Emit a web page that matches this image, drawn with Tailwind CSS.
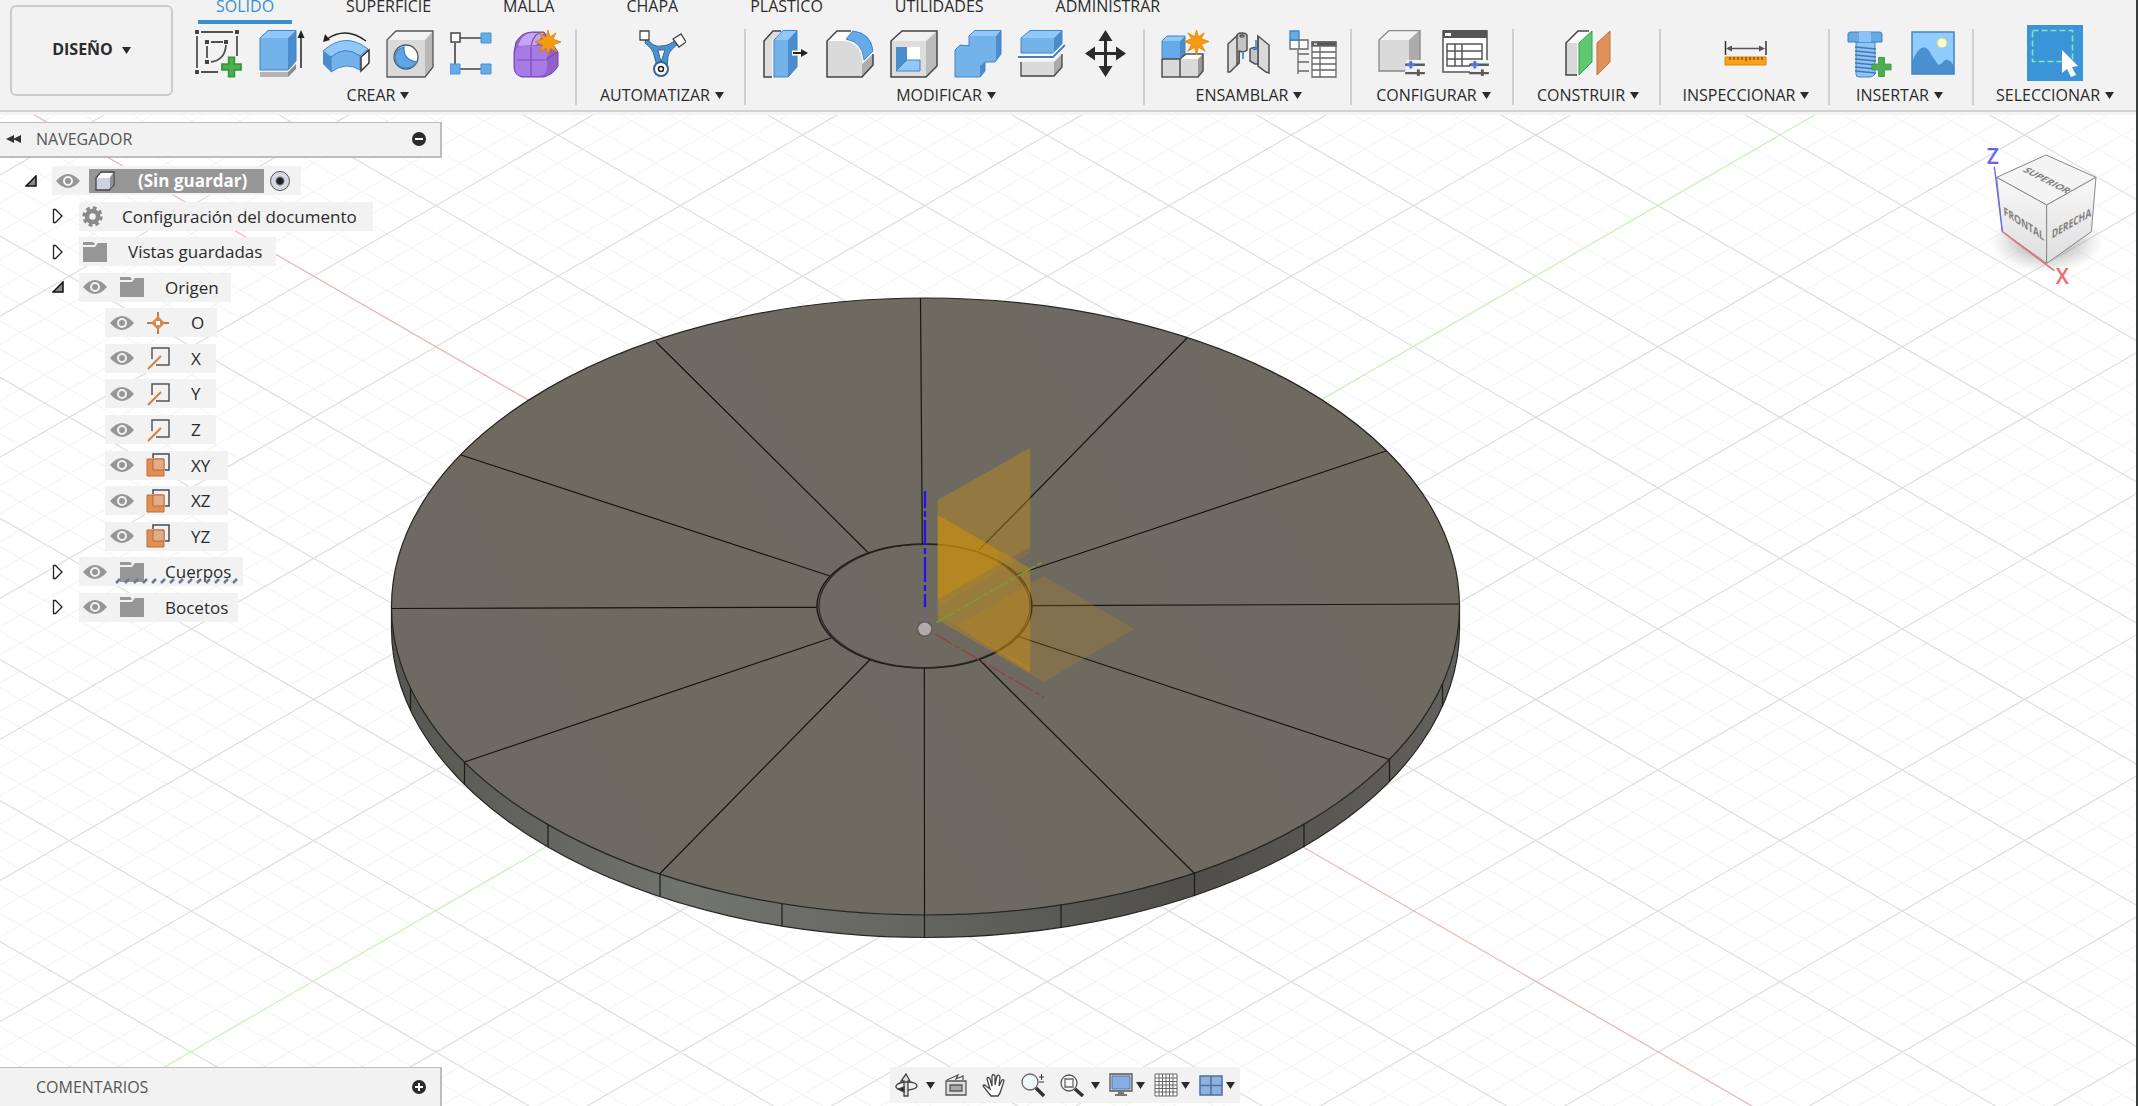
<!DOCTYPE html>
<html lang="es">
<head>
  <meta charset="UTF-8" />
  <meta name="viewport" content="width=device-width, initial-scale=1.0" />
  <title>Diseño (Sin guardar)</title>
  <script src="https://cdn.jsdelivr.net/npm/@tailwindcss/browser@4"></script>
</head>
<body class="flex h-screen flex-col overflow-hidden bg-white font-['Open_Sans','Noto_Sans',sans-serif] text-base text-[#2b2b2b]">

  <!-- shared symbols -->
  <svg class="hidden">
    <symbol id="caret" viewBox="0 0 9 7"><path d="M0 0h9L4.500 7z" fill="#2b2b2b"/></symbol>
    <symbol id="plus" viewBox="0 0 22 22"><path d="M8 1h6v7h7v6h-7v7H8v-7H1V8h7z" fill="#4caf50" stroke="#3a9440"/></symbol>
    <symbol id="star" viewBox="0 0 26 26"><path d="M13 0l2 7 6-4-3 6 8 3-8 3 4 7-7-4-2 8-2-8-7 4 4-7-8-3 8-3-4-6 7 4z" fill="#f39c12" stroke="#d98200" stroke-width=".8"/></symbol>
    <symbol id="eye" viewBox="0 0 24 16"><path d="M0 8Q6 1 12 1t12 7q-6 7-12 7T0 8z" fill="#969696"/><circle cx="12" cy="8" r="4" fill="none" stroke="#f2f2f2" stroke-width="2"/></symbol>
    <symbol id="folder" viewBox="0 0 24 20"><path d="M0 0h10l2 2-1 1H0zM0 5h12l3-4h9v19H0z" fill="#969696"/></symbol>
    <symbol id="closed" viewBox="0 0 12 16"><path d="M1.500 1.500v13h2l6.500-6.500-6.500-6.500z" fill="#fff" stroke="#222" stroke-width="1.300"/></symbol>
    <symbol id="open" viewBox="0 0 12 12"><path d="M11 1v10H1z" fill="#8a8a8a" stroke="#111" stroke-width="1.500"/></symbol>
    <symbol id="axis" viewBox="0 0 24 24"><path d="M6 13V2h17v17H10" fill="none" stroke="#555" stroke-width="1.500"/><path d="M2 23l13-13" stroke="#d17f43" stroke-width="2"/></symbol>
    <symbol id="plane" viewBox="0 0 24 24"><path d="M7 5V1h16v16h-4" fill="none" stroke="#454a50" stroke-width="1.500"/><path d="M1 6h17v17H1z" fill="#e28e54" stroke="#c06d33"/><path d="M7 6h11v11H7z" fill="#e5ab84" stroke="#a4633a" stroke-width=".8"/></symbol>
    <symbol id="sliders" viewBox="0 0 22 16"><path d="M0 4h21M0 13h21" stroke="#5a5a5a" stroke-width="2.500"/><path d="M6 0v8M2 4h8" stroke="#4878d8" stroke-width="3"/><path d="M14 9v8" stroke="#5a5a5a" stroke-width="3"/></symbol>
  </svg>

  <header class="flex h-28 shrink-0 border-b-2 border-[#d2d2d2] bg-[#f2f2f2]">
    <div class="w-[178px] shrink-0 pt-[5px] pl-[10px]">
      <button class="flex h-[91px] w-[163px] items-center justify-center gap-[9px] rounded-md border-2 border-[#cccccc] pb-1 font-bold">DISEÑO
        <svg class="mt-1 h-[7px] w-[9px]"><use href="#caret"/></svg>
      </button>
    </div>

    <div class="flex min-w-0 flex-1 flex-col">
      <!-- tabs -->
      <nav class="flex h-6 shrink-0 items-end gap-[36px] pl-5 whitespace-nowrap">
        <button class="h-6 border-b-4 border-[#3a8fcf] px-[18px] leading-none text-[#3a8fcf]"><span class="relative -top-1">SÓLIDO</span></button>
        <button class="h-6 border-b-4 border-transparent px-[18px] leading-none"><span class="relative -top-1">SUPERFICIE</span></button>
        <button class="h-6 border-b-4 border-transparent px-[18px] leading-none"><span class="relative -top-1">MALLA</span></button>
        <button class="h-6 border-b-4 border-transparent px-[18px] leading-none"><span class="relative -top-1">CHAPA</span></button>
        <button class="h-6 border-b-4 border-transparent px-[18px] leading-none"><span class="relative -top-1">PLÁSTICO</span></button>
        <button class="h-6 border-b-4 border-transparent px-[18px] leading-none"><span class="relative -top-1">UTILIDADES</span></button>
        <button class="h-6 border-b-4 border-transparent px-[18px] leading-none"><span class="relative -top-1">ADMINISTRAR</span></button>
      </nav>

      <!-- tool groups -->
      <div class="flex flex-1 whitespace-nowrap pt-[5px] pb-[5px]">
        <section class="flex w-[399px] shrink-0 flex-col items-center justify-between border-r-2 border-[#cfcfcf] pl-[3px]">
          <div class="flex gap-4 pt-px">
            <button aria-label="Crear boceto"><svg class="size-12 overflow-visible" fill="none" stroke="#505050" stroke-width="1.800"><path d="M7 2h32M3 6v32M7 42h17M43 6v20M17 12h12M13 16v12M32 15q-1 15-15 17"/><path d="M1 0h4v4H1zM41 0h4v4h-4zM1 40h4v4H1zM11 10h4v4h-4zM30 10h4v4h-4zM11 30h4v4h-4z" fill="#444" stroke="none"/><use href="#plus" x="27" y="26" width="21" height="22" stroke="none"/></svg></button>
            <button aria-label="Extruir"><svg class="size-12"><path d="M2 8l8-8h28l-8 8z" fill="#90c8fb"/><path d="M2 8h28v32H2z" fill="#74b2ea"/><path d="M30 8l8-8v31l-8 9z" fill="#4b8ccc"/><path d="M2 8l8-7.500h28V31l-8 9H2z" fill="none" stroke="#4385c5"/><path d="M2 42h28v5H2z" fill="#b5b5b5"/><path d="M30 42l8-8v5l-8 8z" fill="#8b8b8b"/><path d="M43 38V6" stroke="#222" stroke-width="1.500"/><path d="M43 0l3.500 8h-7z" fill="#222"/></svg></button>
            <button aria-label="Revolución"><svg class="size-12"><path d="M44 11Q24-4 5 9" fill="none" stroke="#222" stroke-width="1.500"/><path d="M1 12l2-8 5 6z" fill="#222"/><path d="M1 21Q23 1 46 19l-8 7Q23 15 9 27z" fill="#90c8fb" stroke="#4385c5"/><path d="M1 21l8 6v15l-8-8z" fill="#4b8ccc"/><path d="M9 27q14-12 29-1v14q-14-9-29 2z" fill="#74b2ea" stroke="#4385c5"/><path d="M39 27l8-7v13l-8 8z" fill="#fff" stroke="#333" stroke-width="1.500"/></svg></button>
            <button aria-label="Agujero"><svg class="size-12" stroke="#555" stroke-width="1.300"><path d="M1 10l9-9h37l-8 9z" fill="#f3f3f3" stroke="none"/><path d="M39 10l8-9v36l-8 10z" fill="#b9b9b9" stroke="none"/><path d="M1 10h38v37H1z" fill="#dadada" stroke="none"/><path d="M1 10l9-9h37v36l-8 10H1z" fill="none"/><circle cx="20" cy="27" r="12" fill="#fff"/><path d="M18 17q-1 13 13 15-4 6-11 6-10 0-11-11 1-8 9-10z" fill="#5fa5e6" stroke="#4385c5"/></svg></button>
            <button aria-label="Patrón"><svg class="size-12"><path d="M10 8h21M5 13v21M10 39h21" stroke="#444" stroke-width="1.600"/><path d="M1 3h9v9H1z" fill="#fff" stroke="#444" stroke-width="1.500"/><path d="M31 3h10v10H31zM0 34h10v10H0zM31 34h10v10H31z" fill="#67aaea" stroke="#4d92d4"/></svg></button>
            <button aria-label="Crear forma"><svg class="size-12 overflow-visible"><path d="M2 12Q8 2 18 2h12l14 20v14q-4 8-14 11H8q-8-2-8-10V22z" fill="#8e62c9" stroke="#7044ad"/><path d="M1 25q0-9 7-9h18q7 0 7 9v12q0 9-9 9H9q-8 0-8-9z" fill="#a67be6"/><path d="M4 16Q8 3 18 3h12l-8 12z" fill="#c6a3f3"/><path d="M3 30h28M17 17v29M17 16q2-10 8-13M32 30l11-8" fill="none" stroke="#7a4cb8" stroke-width="1.200"/><use href="#star" x="21" y="0" width="26" height="26"/></svg></button>
          </div>
          <button class="flex items-center gap-[5px] leading-5">CREAR <svg class="h-[7px] w-[9px]"><use href="#caret"/></svg></button>
        </section>

        <section class="flex w-[169px] shrink-0 flex-col items-center justify-between border-r-2 border-[#cfcfcf] pl-[3px]">
          <div class="flex gap-4 pt-px">
            <button aria-label="Automatizar"><svg class="size-12"><path d="M8 8q8 10 15 8 9 0 15-7l4 4q-10 6-12 13 0 7-2 13H19q-1-8-3-14-1-6-9-12z" fill="#4d90d4" stroke="#36648f"/><path d="M20 20h7l-4 12z" fill="#fff" stroke="#36648f"/><path d="M2 1h9v9H2zM35 9l8-5 5 8-7 5z" fill="#fff" stroke="#444" stroke-width="1.300"/><circle cx="23" cy="39" r="7" fill="#fff" stroke="#36648f" stroke-width="2"/><circle cx="23" cy="39" r="2.500" fill="none" stroke="#222" stroke-width="1.500"/></svg></button>
          </div>
          <button class="flex items-center gap-[5px] leading-5">AUTOMATIZAR <svg class="h-[7px] w-[9px]"><use href="#caret"/></svg></button>
        </section>

        <section class="flex w-[399px] shrink-0 flex-col items-center justify-between border-r-2 border-[#cfcfcf] pl-[3px]">
          <div class="flex gap-4 pt-px">
            <button aria-label="Pulsar/tirar"><svg class="size-12"><path d="M2 11l9-10h8l-9 10v36H2z" fill="#ddd"/><path d="M10 47H2V11l9-10h8" fill="none" stroke="#444" stroke-width="1.500"/><path d="M12 10l9-10h14l-9 10z" fill="#90c8fb"/><path d="M12 10h14v37H12z" fill="#74b2ea"/><path d="M26 10l9-10v37l-9 10z" fill="#4b8ccc"/><path d="M12 10l9-9.500h14V37l-9 10H12z" fill="none" stroke="#3f82c4"/><path d="M30 23h9" stroke="#fff" stroke-width="5"/><path d="M31 23h9" stroke="#222" stroke-width="2"/><path d="M39 19l7 4-7 4z" fill="#222"/></svg></button>
            <button aria-label="Empalme"><svg class="size-12"><path d="M1 11l10-10h14l-6 10z" fill="#fff"/><path d="M1 47V11h18q16 3 17 20v16z" fill="#dadada"/><path d="M36 34l11-10v11L36 47z" fill="#adadad"/><path d="M25 1H11L1 11v36h35l11-12V24" fill="none" stroke="#444" stroke-width="1.500"/><path d="M20 9l7-8q18 2 20 20l-9 9Q37 12 20 9z" fill="#67aaea" stroke="#4385c5"/></svg></button>
            <button aria-label="Vaciado"><svg class="size-12"><path d="M1 11L12 1h35L36 11z" fill="#f0f0f0"/><path d="M36 11L47 1v35L36 47z" fill="#bcbcbc"/><path d="M1 11h35v36H1z" fill="#ddd"/><path d="M1 11L12 1h35v35L36 47H1z" fill="none" stroke="#444" stroke-width="1.500"/><path d="M6 17h24v24H6z" fill="#fff"/><path d="M6 17h11v14L6 41z" fill="#4b8ccc"/><path d="M6 41l11-11h13v11z" fill="#90c8fb" stroke="#4385c5"/></svg></button>
            <button aria-label="Combinar"><svg class="size-12"><path d="M15 7l6-7h26l-5 6z" fill="#90c8fb"/><path d="M42 6l5-6v24l-6 8z" fill="#4b8ccc"/><path d="M15 6h27v26H31v9l-5 6H1V20l5-5h9z" fill="#74b2ea"/><path d="M26 47l5-6V32l-5 4z" fill="#4b8ccc"/><path d="M15 16V6l6-5.500h26V24l-6 8H31v9l-5 6H1V20l5-5z" fill="none" stroke="#4385c5"/></svg></button>
            <button aria-label="Dividir"><svg class="size-12"><path d="M3 8l9-8h32l-8 8z" fill="#90c8fb"/><path d="M3 8h33v15H3z" fill="#74b2ea"/><path d="M36 8l8-8v15l-8 8z" fill="#4b8ccc"/><path d="M3 8l9-7.500h32V15l-8 8H3z" fill="none" stroke="#4385c5"/><path d="M3 32h33v14H3z" fill="#dadada"/><path d="M36 32l8-8v13l-8 9z" fill="#aaa"/><path d="M3 32v14h33l8-9V24" fill="none" stroke="#444" stroke-width="1.300"/><path d="M0 27h35l12-12" fill="none" stroke="#fff" stroke-width="5"/><path d="M0 27h35l12-12" fill="none" stroke="#3f82c4" stroke-width="2"/></svg></button>
            <button aria-label="Desplazar"><svg class="size-12"><path d="M23.500 8v32M7 23.500h33" stroke="#2b2b2b" stroke-width="3"/><path d="M23.500 0l7 11h-14zM23.500 47l7-11h-14zM3 23.500l10-7v14zM44 23.500l-10-7v14z" fill="#2b2b2b"/></svg></button>
          </div>
          <button class="flex items-center gap-[5px] leading-5">MODIFICAR <svg class="h-[7px] w-[9px]"><use href="#caret"/></svg></button>
        </section>

        <section class="flex w-[207px] shrink-0 flex-col items-center justify-between border-r-2 border-[#cfcfcf] pl-[3px]">
          <div class="flex gap-4 pt-px">
            <button aria-label="Nuevo componente"><svg class="size-12 overflow-visible"><path d="M1 11l5-5h18l-5 5z" fill="#90c8fb"/><path d="M1 11h18v18H1z" fill="#67aaea"/><path d="M19 11l5-5v18l-5 5z" fill="#4b8ccc"/><path d="M1 11l5-5h18v18l-5 5H1z" fill="none" stroke="#4385c5"/><path d="M19 29l6-5h17l-5 5z" fill="#fff"/><path d="M1 29h36v18H1z" fill="#dadada"/><path d="M37 29l5-5v17l-5 6z" fill="#999"/><path d="M1 29v18h36l5-6V24H25l-6 5v18M1 29h18" fill="none" stroke="#505050" stroke-width="1.500"/><use href="#star" x="23" y="0" width="25" height="25"/></svg></button>
            <button aria-label="Unión"><svg class="size-12" stroke="#505050" stroke-width="1.500"><path d="M3 14L14 4v29L5 42H3z" fill="#dadada"/><path d="M12 6q0-3 5-3t5 3v14q-3 3-8 1v12l-2 2z" fill="#c4c4c4"/><ellipse cx="17" cy="6" rx="2" ry="1" fill="#fff"/><path d="M33 6l11 9v28l-3-1-8-6z" fill="#dadada"/><path d="M33 6v28h-3l-5-3V19q4-3 8 0z" fill="#c4c4c4"/><path d="M18 21v8M31 10v9M27 18q3 3 6 0" fill="none" stroke="#3b78c8"/></svg></button>
            <button aria-label="Tabla de componentes"><svg class="size-12" stroke="#666" stroke-width="1.300"><path d="M1 10h9v9H1zM10 10h9v9h-9z" fill="#fff"/><path d="M1 1h9v9H1z" fill="#67aaea" stroke="#4385c5"/><path d="M9 20v24M9 24h11M9 32h11M9 41h11" fill="none"/><path d="M23 12h24v35H23z" fill="#fff"/><path d="M23 12h24v4H23z" fill="#555"/><path d="M25 14h3" stroke="#fff"/><path d="M31 17v30M23 22h24M23 28h24M23 34h24M23 40h24"/></svg></button>
          </div>
          <button class="flex items-center gap-[5px] leading-5">ENSAMBLAR <svg class="h-[7px] w-[9px]"><use href="#caret"/></svg></button>
        </section>

        <section class="flex w-[162px] shrink-0 flex-col items-center justify-between border-r-2 border-[#cfcfcf] pl-[3px]">
          <div class="flex gap-4 pt-px">
            <button aria-label="Configurar"><svg class="size-12"><path d="M1 10l10-10h31L31 10z" fill="#f3f3f3"/><path d="M31 10L42 0v30L31 41z" fill="#acacac"/><path d="M1 10h30v31H1z" fill="#dadada"/><path d="M27 41H1V10L11 .5h31V30" fill="none" stroke="#888" stroke-width="1.300"/><path d="M28 30h20v18H28z" fill="#f2f2f2"/><use href="#sliders" x="27" y="31" width="21" height="15"/></svg></button>
            <button aria-label="Tabla de configuración"><svg class="size-12"><path d="M1 1h44v41H1z" fill="#fff" stroke="#555" stroke-width="1.500"/><path d="M1 0h44v8H1z" fill="#555"/><path d="M3 3h6v3H3z" fill="#fff"/><path d="M5 14h35v22H5zM13 14v22M20 14v22M5 21h35M5 29h35" fill="none" stroke="#555" stroke-width="1.500"/><path d="M28 30h20v18H28z" fill="#f2f2f2"/><use href="#sliders" x="27" y="31" width="21" height="15"/></svg></button>
          </div>
          <button class="flex items-center gap-[5px] leading-5">CONFIGURAR <svg class="h-[7px] w-[9px]"><use href="#caret"/></svg></button>
        </section>

        <section class="flex w-[147px] shrink-0 flex-col items-center justify-between border-r-2 border-[#cfcfcf] pl-[3px]">
          <div class="flex gap-4 pt-px">
            <button aria-label="Plano desfasado"><svg class="size-12"><path d="M2 13L14 1h12L14 13z" fill="#fff"/><path d="M2 13h11v32H2z" fill="#dadada"/><path d="M13 45H2V13L14 1h11" fill="none" stroke="#444" stroke-width="1.500"/><path d="M15 13L28 1v31L15 45z" fill="#5fc873" stroke="#3f9e52"/><path d="M33 13L46 1v31L33 45z" fill="#e0915a" stroke="#bb7341"/></svg></button>
          </div>
          <button class="flex items-center gap-[5px] leading-5">CONSTRUIR <svg class="h-[7px] w-[9px]"><use href="#caret"/></svg></button>
        </section>

        <section class="flex w-[169px] shrink-0 flex-col items-center justify-between border-r-2 border-[#cfcfcf] pl-[3px]">
          <div class="flex gap-4 pt-px">
            <button aria-label="Medir"><svg class="size-12"><path d="M3.500 11v14M44 11v14" stroke="#333" stroke-width="1.500"/><path d="M8 18.500h32" stroke="#555" stroke-width="1.500"/><path d="M4 18.500l6-3v6zM43 18.500l-6-3v6z" fill="#555"/><path d="M3 27h41v8H3z" fill="#f5a11c" stroke="#dc8700"/><path d="M8 27v3M12 27v3M16 27v3M20 27v3M24 27v4M28 27v3M32 27v3M36 27v3M40 27v3" stroke="#553300"/></svg></button>
          </div>
          <button class="flex items-center gap-[5px] leading-5">INSPECCIONAR <svg class="h-[7px] w-[9px]"><use href="#caret"/></svg></button>
        </section>

        <section class="flex w-[144px] shrink-0 flex-col items-center justify-between border-r-2 border-[#cfcfcf] pl-[3px]">
          <div class="flex gap-4 pt-px">
            <button aria-label="Insertar fijación"><svg class="size-12"><path d="M9 12h19v32q-2 3-5 3H12q-3 0-3-3z" fill="#90c4f5" stroke="#4385c5"/><path d="M8 17l21 2M8 21l21 2M8 25l21 2M8 29l21 2M8 33l21 2M8 37l21 2M8 41l21 2" stroke="#3f78b4" stroke-width="1.300"/><path d="M1 4q0-2 3-2h28q3 0 3 2v8H1z" fill="#67a8e6" stroke="#4080bd"/><path d="M12 2h12v10H12z" fill="#8cc2f5"/><use href="#plus" x="24" y="26" width="21" height="22"/></svg></button>
            <button aria-label="Lienzo"><svg class="size-12"><path d="M1 2h42v42H1z" fill="#90ccff"/><path d="M1 32q11-26 20-6l5 7q2 4 6-1 5-6 11 4v8H1z" fill="#4a8fd0"/><path d="M1 2h42v42H1z" fill="none" stroke="#4684bd" stroke-width="1.500"/><circle cx="31" cy="13" r="5" fill="#fbfbd0" stroke="#c9d68a"/></svg></button>
          </div>
          <button class="mr-[6px] flex items-center gap-[5px] leading-5">INSERTAR <svg class="h-[7px] w-[9px]"><use href="#caret"/></svg></button>
        </section>

        <section class="flex w-[162px] shrink-0 flex-col items-center justify-between">
          <button class="-mt-1 bg-[#3c94d8]" aria-label="Seleccionar"><svg class="size-14"><path d="M5.500 5.500h40v31h-40z" fill="none" stroke="#7fe8b4" stroke-width="1.600" stroke-dasharray="6 3"/><path d="M35 25l16 16-6 1 4 8-5 2-4-8-5 4z" fill="#fff"/></svg></button>
          <button class="flex items-center gap-[5px] leading-5">SELECCIONAR <svg class="h-[7px] w-[9px]"><use href="#caret"/></svg></button>
        </section>
      </div>
    </div>
  </header>

  <main class="relative flex min-h-0 flex-1 flex-col justify-between">
    <!-- 3D scene -->
    <svg class="absolute inset-0 h-full w-full" viewBox="0 112 2138 994" preserveAspectRatio="xMidYMid slice">
      <defs>
        <linearGradient id="rim" gradientUnits="userSpaceOnUse" x1="391" y1="0" x2="1460" y2="0">
          <stop offset="0" stop-color="#55564f"/><stop offset=".28" stop-color="#72746e"/><stop offset=".45" stop-color="#686964"/><stop offset=".75" stop-color="#4f4e49"/><stop offset="1" stop-color="#62615b"/>
        </linearGradient>
        <linearGradient id="face" gradientUnits="userSpaceOnUse" x1="391" y1="500" x2="700" y2="330" spreadMethod="reflect">
          <stop offset="0" stop-color="#6e6963"/><stop offset=".5" stop-color="#6e6a60"/><stop offset="1" stop-color="#6e6a63"/>
        </linearGradient>
      </defs>
      <path id="minor" fill="none" stroke="#f2f2f2" stroke-width="1"/>
      <path id="major" fill="none" stroke="#dedede" stroke-width="1.200"/>
      <path d="M17 105L1752 1106" stroke="#f0b0b0" stroke-width="1.200"/>
      <path d="M1832 105L97 1106" stroke="#c4f3b6" stroke-width="1.200"/>

      <path d="M391.500 606.500v22A534 309 0 0 0 1459.500 628.500v-22z" fill="url(#rim)" stroke="#262522" stroke-width="1.200"/>
      <ellipse cx="925.500" cy="606.500" rx="534" ry="308.500" fill="url(#face)" stroke="#262522" stroke-width="1.200"/>
      <path d="M410.500 688v23M464.500 762v23M548 825v22M660 873.500v22.500M782 904v22M924.500 915v22M1061 905v22M1194.500 873v23M1304 824v23M1389.500 759v23M1442.500 684v23" stroke="#1c1b19" stroke-width="1.200"/>
      <path d="M920.500 298L922.300 544M656 342L868.300 552.700M461 455L829.300 575.700M391.500 608.500L816.700 607.300M464.500 762L831.700 637.700M660 873.500L870.700 659M924.500 915L924.300 668.300M1194.500 873.500L979 659.300M1389.500 759.500L1019 636.700M1459.500 604L1032.300 605.700M1386 451L1017.700 574.300M1187 338L979 550" stroke="#161513" stroke-width="1.200"/>
      <ellipse cx="924.500" cy="606" rx="107.500" ry="62" fill="none" stroke="#1c1b19" stroke-width="1.500"/>
      <ellipse cx="924.500" cy="606" rx="105.500" ry="61.500" fill="none" stroke="#2a2825" stroke-width="1.200"/>

      <!-- origin planes and axes -->
      <path d="M937.700 500L1030.300 447.700V547L937.700 600z" fill="#c58c13" fill-opacity=".42"/>
      <path d="M937.700 600L1030.300 547V553L937.700 607z" fill="#c58c13" fill-opacity=".18"/>
      <path d="M937.700 515L1030.300 568.300V671L937.700 615z" fill="#d2940b" fill-opacity=".42"/>
      <path d="M937.700 515L998 550V564L937.700 599z" fill="#d2940b" fill-opacity=".22"/>
      <path d="M1044 576L1134.300 629L1043.300 682.300L957 625z" fill="#c58c13" fill-opacity=".24"/>
      <path d="M937.700 615L1030.300 668V673.700L937.700 620z" fill="#c58c13" fill-opacity=".4"/>
      <path d="M936.500 622.500L1044 561" stroke="#74a035" stroke-width="1.500" stroke-dasharray="20 3 5 3"/>
      <path d="M935 634L1044 697.500" stroke="#8d4741" stroke-width="1.500" stroke-dasharray="20 3 5 3"/>
      <path d="M925 491v17m0 3v6m0 3v25m0 3v6m0 3v25m0 3v6m0 3v13" stroke="#2412e6" stroke-width="2.300"/>
      <path d="M925 607V621" stroke="#6560a0" stroke-width="1"/>
      <circle cx="924.700" cy="629" r="8" fill="#5f5c56"/>
      <circle cx="924.700" cy="629" r="6.500" fill="#aeaca8"/>
    </svg>

    <!-- view cube -->
    <svg class="absolute top-2 right-0 h-[180px] w-[198px]" viewBox="0 0 594 540" aria-label="ViewCube">
      <defs>
        <radialGradient id="shade"><stop offset=".4" stop-color="#888" stop-opacity=".5"/><stop offset="1" stop-color="#aaa" stop-opacity="0"/></radialGradient>
        <linearGradient id="side" x1="0" y1="0" x2="0" y2="1"><stop offset="0" stop-color="#f8f8f8"/><stop offset="1" stop-color="#dedede"/></linearGradient>
      </defs>
      <ellipse cx="320" cy="365" rx="170" ry="95" fill="url(#shade)"/>
      <g stroke="#888" stroke-width="3" stroke-linejoin="round">
        <path d="M318 105L468 172L320 255L170 172z" fill="#f4f4f4"/>
        <path d="M170 172L320 255V430L187 335z" fill="url(#side)"/>
        <path d="M468 172L320 255V430L454 335z" fill="url(#side)"/>
      </g>
      <path d="M163 140L187 335" stroke="#6b6bee" stroke-width="4"/>
      <path d="M187 335L343 452" stroke="#dc7878" stroke-width="5"/>
      <g fill="#808080" font-size="32" font-weight="700">
        <text transform="matrix(.84 .43 -.8 .5 246 153)" x="0" y="0">SUPERIOR</text>
        <text transform="matrix(.82 .53 .05 1.100 191 284)" x="0" y="0">FRONTAL</text>
        <text transform="matrix(.8 -.46 -.03 1.100 335 356)" x="0" y="0">DERECHA</text>
      </g>
      <text x="140" y="133" font-size="63" font-weight="600" fill="#6464f0">Z</text>
      <text x="347" y="493" font-size="63" font-weight="600" fill="#ee6a6a">X</text>
    </svg>

    <!-- browser -->
    <aside class="relative w-[442px] pt-[10px]">
      <div class="flex h-9 items-center border-r-2 border-b-2 border-t border-[#bdbdbd] bg-[#f2f2f2] pr-[14px] pb-px pl-[6px] text-[#555]">
        <svg class="h-2 w-4" fill="#333"><path d="M8 0v8L0 4zM15 0v8L7 4z"/></svg>
        <h2 class="flex-1 pl-[14px]">NAVEGADOR</h2>
        <button aria-label="Contraer"><svg class="size-[14px]"><circle cx="7" cy="7" r="7" fill="#2b2b2b"/><path d="M3 7h8" stroke="#fff" stroke-width="2"/></svg></button>
      </div>
      <ul class="mt-2 flex h-[456px] flex-col justify-between whitespace-nowrap text-[17px] leading-[29px]">
        <li class="flex h-[29px] items-center pl-[25px]">
          <button class="w-[27px]" aria-label="Contraer"><svg class="size-3"><use href="#open"/></svg></button>
          <div class="flex h-full items-center bg-[#f2f2f2] pr-[11px] pl-1">
            <svg class="h-4 w-6"><use href="#eye"/></svg>
            <div class="ml-[9px] flex h-6 w-[175px] items-center bg-[#969696] pl-[6px] font-bold text-white">
              <svg class="h-5 w-5"><path d="M1 7l5-6h13v13l-5 5H1z" fill="#ccd3df" stroke="#444" stroke-width="1.300"/><path d="M2 7l4-5h12l-4 5z" fill="#fff"/><path d="M15 7l3-5v12l-3 4z" fill="#8b909a"/></svg>
              <span class="pl-[23px]">(Sin guardar)</span>
            </div>
            <input type="radio" name="activo" checked aria-label="Activar componente" class="ml-[6px] size-5 appearance-none rounded-full border border-[#555] bg-[radial-gradient(circle,#222_3px,#d5d9e2_5px)]" />
          </div>
        </li>
        <li class="flex h-[29px] items-center pl-[52px]">
          <button class="w-[27px]" aria-label="Expandir"><svg class="h-4 w-3"><use href="#closed"/></svg></button>
          <div class="flex h-full items-center bg-[#f2f2f2] pr-4 pl-[3px]">
            <svg class="size-[21px]" viewBox="0 0 21 21"><circle cx="10.500" cy="10.500" r="8.200" fill="none" stroke="#8a8a8a" stroke-width="4" stroke-dasharray="3.600 2.840"/><circle cx="10.500" cy="10.500" r="5.500" fill="none" stroke="#8a8a8a" stroke-width="4.500"/></svg>
            <span class="pl-[19px]">Configuración del documento</span>
          </div>
        </li>
        <li class="flex h-[29px] items-center pl-[52px]">
          <button class="w-[27px]" aria-label="Expandir"><svg class="h-4 w-3"><use href="#closed"/></svg></button>
          <div class="flex h-full items-center bg-[#f2f2f2] pr-[14px] pl-1"><svg class="h-5 w-6"><use href="#folder"/></svg><span class="pl-[21px]">Vistas guardadas</span></div>
        </li>
        <li class="flex h-[29px] items-center pl-[52px]">
          <button class="w-[27px]" aria-label="Contraer"><svg class="size-3"><use href="#open"/></svg></button>
          <div class="flex h-full items-center bg-[#f2f2f2] pr-3 pl-1"><svg class="h-4 w-6"><use href="#eye"/></svg><svg class="ml-[13px] h-5 w-6"><use href="#folder"/></svg><span class="pl-[21px]">Origen</span></div>
        </li>
        <li class="flex h-[29px] pl-[105px]"><div class="flex min-w-[111px] items-center bg-[#f2f2f2] pr-[13px] pl-[5px]"><svg class="h-4 w-6"><use href="#eye"/></svg><svg class="ml-3 size-6" viewBox="0 0 24 24"><path d="M12 1v22M1 12h22" stroke="#c87840" stroke-width="2"/><path d="M12 5l7 7-7 7-7-7z" fill="#d98a50"/><path d="M10 10h4v4h-4z" fill="#fff"/></svg><span class="pl-[21px]">O</span></div></li>
        <li class="flex h-[29px] pl-[105px]"><div class="flex min-w-[111px] items-center bg-[#f2f2f2] pr-[13px] pl-[5px]"><svg class="h-4 w-6"><use href="#eye"/></svg><svg class="ml-3 size-6"><use href="#axis"/></svg><span class="pl-[21px]">X</span></div></li>
        <li class="flex h-[29px] pl-[105px]"><div class="flex min-w-[111px] items-center bg-[#f2f2f2] pr-[13px] pl-[5px]"><svg class="h-4 w-6"><use href="#eye"/></svg><svg class="ml-3 size-6"><use href="#axis"/></svg><span class="pl-[21px]">Y</span></div></li>
        <li class="flex h-[29px] pl-[105px]"><div class="flex min-w-[111px] items-center bg-[#f2f2f2] pr-[13px] pl-[5px]"><svg class="h-4 w-6"><use href="#eye"/></svg><svg class="ml-3 size-6"><use href="#axis"/></svg><span class="pl-[21px]">Z</span></div></li>
        <li class="flex h-[29px] pl-[105px]"><div class="flex min-w-[123px] items-center bg-[#f2f2f2] pr-[13px] pl-[5px]"><svg class="h-4 w-6"><use href="#eye"/></svg><svg class="ml-3 size-6"><use href="#plane"/></svg><span class="pl-[21px]">XY</span></div></li>
        <li class="flex h-[29px] pl-[105px]"><div class="flex min-w-[123px] items-center bg-[#f2f2f2] pr-[13px] pl-[5px]"><svg class="h-4 w-6"><use href="#eye"/></svg><svg class="ml-3 size-6"><use href="#plane"/></svg><span class="pl-[21px]">XZ</span></div></li>
        <li class="flex h-[29px] pl-[105px]"><div class="flex min-w-[123px] items-center bg-[#f2f2f2] pr-[13px] pl-[5px]"><svg class="h-4 w-6"><use href="#eye"/></svg><svg class="ml-3 size-6"><use href="#plane"/></svg><span class="pl-[21px]">YZ</span></div></li>
        <li class="flex h-[29px] items-center pl-[52px]">
          <button class="w-[27px]" aria-label="Expandir"><svg class="h-4 w-3"><use href="#closed"/></svg></button>
          <div class="relative flex h-full items-center bg-[#f2f2f2] pr-3 pl-1"><svg class="h-4 w-6"><use href="#eye"/></svg><svg class="ml-[13px] h-5 w-6"><use href="#folder"/></svg><span class="pl-[21px]">Cuerpos</span>
            <svg class="absolute bottom-[2px] left-9 h-[6px] w-[124px]" stroke="#6e7896" stroke-width="2.500"><path d="M1 5l4-4m5 4l4-4m5 4l4-4m5 4l4-4m5 4l4-4m5 4l4-4m5 4l4-4m5 4l4-4m5 4l4-4m5 4l4-4m5 4l4-4m5 4l4-4m5 4l4-4m5 4l4-4"/></svg>
          </div>
        </li>
        <li class="flex h-[29px] items-center pl-[52px]">
          <button class="w-[27px]" aria-label="Expandir"><svg class="h-4 w-3"><use href="#closed"/></svg></button>
          <div class="flex h-full items-center bg-[#f2f2f2] pr-[10px] pl-1"><svg class="h-4 w-6"><use href="#eye"/></svg><svg class="ml-[13px] h-5 w-6"><use href="#folder"/></svg><span class="pl-[21px]">Bocetos</span></div>
        </li>
      </ul>
    </aside>

    <footer class="relative flex items-end">
      <div class="flex h-[39px] w-[442px] shrink-0 items-center border-t border-r-2 border-[#bdbdbd] bg-[#f2f2f2] pr-[14px] pl-9 text-[#555]">
        <h2 class="flex-1">COMENTARIOS</h2>
        <button aria-label="Expandir"><svg class="size-[14px]"><circle cx="7" cy="7" r="7" fill="#2b2b2b"/><path d="M3 7h8M7 3v8" stroke="#fff" stroke-width="2"/></svg></button>
      </div>

      <!-- navigation bar -->
      <div class="absolute bottom-[3px] left-[calc(50%-179px)] flex h-9 items-center gap-[9px] bg-[#f2f2f2] pr-[5px] pl-[5px]">
        <button class="flex items-center gap-[7px]" aria-label="Órbita"><svg class="size-6" fill="none" stroke="#444" stroke-width="1.300"><path d="M9 23V8H6l5-7 4 7h-2v15z" fill="#ddd"/><path d="M6 17q-6-2-5-4 2-4 11-4 10 0 10 4 0 3-9 4"/><path d="M3 16l6-2v5z" fill="#222"/></svg><svg class="h-[7px] w-[9px]"><use href="#caret"/></svg></button>
        <button class="mr-[5px]" aria-label="Mirar a"><svg class="size-6" stroke="#555" stroke-width="1.300"><path d="M2 8h20v14H2z" fill="#ddd"/><path d="M6 12h12v6H6z" fill="#aaa"/><path d="M3 7l11-5-2 4 7-3v4" fill="none"/></svg></button>
        <button class="mr-[6px]" aria-label="Encuadre"><svg class="size-6"><path d="M9 23Q5 18 1 13q1-2 3 0l4 3-3-10q1-3 3 0l2 7V3q1-3 3 0v9l2-9q2-2 3 1l-1 9 3-6q2-1 2 1l-3 9q-1 4-3 6z" fill="#fff" stroke="#444" stroke-width="1.300"/></svg></button>
        <button class="mr-[6px]" aria-label="Zoom"><svg class="size-6"><circle cx="9" cy="9" r="8" fill="#eef8f8" stroke="#666" stroke-width="1.300"/><path d="M15 15l8 8" stroke="#333" stroke-width="3.500"/><path d="M18 4h5M20.500 1v6M18 9h5" stroke="#333"/></svg></button>
        <button class="flex items-center gap-[7px]" aria-label="Ajustar"><svg class="size-6"><circle cx="9" cy="10" r="8" fill="#f8f8f8" stroke="#555" stroke-width="1.300"/><path d="M5 6h8v8H5z" fill="none" stroke="#666" stroke-width="1.300"/><path d="M15 16l8 7" stroke="#333" stroke-width="3.500"/></svg><svg class="h-[7px] w-[9px]"><use href="#caret"/></svg></button>
        <button class="flex items-center gap-[3px]" aria-label="Configuración de visualización"><svg class="size-6"><path d="M1 1h22v17H1z" fill="#ddd" stroke="#555" stroke-width="1.300"/><path d="M3 3h18v13H3z" fill="#85aee3" stroke="#5577a5"/><path d="M9 18h6v3h3v2H6v-2h3z" fill="#777"/></svg><svg class="h-[7px] w-[9px]"><use href="#caret"/></svg></button>
        <button class="flex items-center gap-[3px]" aria-label="Rejilla"><svg class="size-6"><path d="M1 1h22v22H1zM5 1v22M8.500 1v22M12 1v22M15.500 1v22M19 1v22M1 5h22M1 8.500h22M1 12h22M1 15.500h22M1 19h22" fill="#fff" stroke="#666"/></svg><svg class="h-[7px] w-[9px]"><use href="#caret"/></svg></button>
        <button class="flex items-center gap-[3px]" aria-label="Ventanas gráficas"><svg class="size-6"><path d="M1 3h22v19H1z" fill="#8fb1de" stroke="#4c6f9e" stroke-width="1.500"/><path d="M12 3v19M1 12.500h22" stroke="#4c6f9e" stroke-width="1.500"/></svg><svg class="h-[7px] w-[9px]"><use href="#caret"/></svg></button>
      </div>
    </footer>
    <div class="absolute inset-x-0 top-0 h-[3px] bg-[#f4f4f4]"></div>
  </main>
  <div class="absolute top-0 right-0 h-full w-[2px] bg-[#37423f]"></div>

  <script>
    // isometric ground grid: every fifth line is a major one
    const ORIGIN = { x: 924.7, y: 628.9 };
    const STEP = 28.22;
    const SLOPE = 70.55 / 122.2;
    const lines = { minor: '', major: '' };

    for (let i = -60; i <= 60; i++) {
      if (i === 0) continue;
      const kind = i % 5 === 0 ? 'major' : 'minor';
      const y = ORIGIN.y + i * STEP;
      const left = ORIGIN.x * SLOPE;
      const right = (2138 - ORIGIN.x) * SLOPE;
      lines[kind] += `M0 ${y - left}L2138 ${y + right}M0 ${y + left}L2138 ${y - right}`;
    }
    document.getElementById('minor').setAttribute('d', lines.minor);
    document.getElementById('major').setAttribute('d', lines.major);
  </script>
</body>
</html>
